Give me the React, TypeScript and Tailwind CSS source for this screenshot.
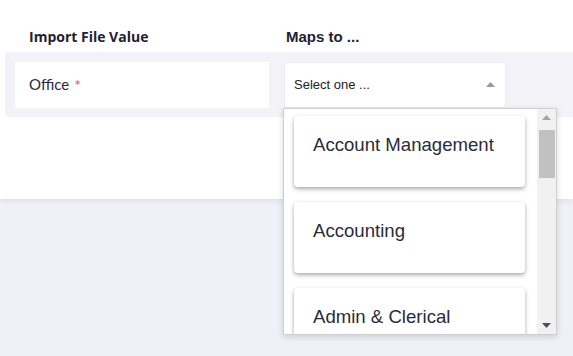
import React from "react";

const items = ["Account Management", "Accounting", "Admin & Clerical"];

export default function App() {
  return (
    <div className="relative min-h-[356px] w-full overflow-hidden bg-[#f0f0f8]">
      <div className="h-[199px] bg-white shadow-[0_2px_6px_rgba(0,0,0,0.08)]">
        <div className="flex h-[52px] items-start pt-[28px] text-[#222230]">
          <div className="ml-[29px] w-[257px] font-['Open_Sans',sans-serif] text-[14px] font-bold leading-[18px]">
            Import File Value
          </div>
          <div className="font-['Liberation_Sans',Arial,sans-serif] text-[15px] font-bold leading-[18px]">
            Maps to ...
          </div>
        </div>
        <div className="ml-[5px] flex h-[65px] items-center gap-[15px] rounded-l-[4px] bg-[#f2f2f8] px-[10px]">
          <div className="flex h-[46px] w-[254px] items-center bg-white pl-[14px] font-['Lato',sans-serif] text-[15px] text-[#2a2a3a]">
            Office<span className="ml-[5px] text-[16px] text-[#ff4d5e]">*</span>
          </div>
          <div className="flex h-[46px] w-[222px] items-center justify-between border border-[#ececf0] bg-white pl-[9px] pr-[10px] font-['Liberation_Sans',Arial,sans-serif] text-[13px] text-[#222]">
            <span>Select one ...</span>
            <svg width="9" height="5" viewBox="0 0 9 5">
              <path d="M0 5 L4.5 0 L9 5 Z" fill="#9a9a9a" />
            </svg>
          </div>
        </div>
      </div>

      <div className="absolute left-[283px] top-[108px] flex h-[227px] w-[274px] border border-[#cfcfcf] bg-white shadow-[0_2px_6px_rgba(0,0,0,0.15)]">
        <div className="flex flex-1 flex-col gap-[15px] overflow-hidden pl-[10px] pr-[9px] pt-[7px]">
          {items.map((t) => (
            <div
              key={t}
              className="h-[71px] w-[231px] shrink-0 rounded-[4px] bg-white pl-[19px] pt-[18px] font-['Liberation_Sans',Arial,sans-serif] text-[18.6px] leading-[22px] text-[#2b2b3a] shadow-[0_2px_4px_rgba(0,0,0,0.35)]"
            >
              {t}
            </div>
          ))}
        </div>
        <div className="flex w-[19px] flex-col items-center bg-[#f1f1f1]">
          <div className="flex h-[17px] w-full items-center justify-center">
            <svg width="9" height="5" viewBox="0 0 9 5">
              <path d="M0 5 L4.5 0 L9 5 Z" fill="#a3a3a3" />
            </svg>
          </div>
          <div className="ml-[1px] mt-[4px] h-[48px] w-[16px] bg-[#c1c1c1]" />
          <div className="flex-1" />
          <div className="flex h-[17px] w-full items-center justify-center">
            <svg width="9" height="5" viewBox="0 0 9 5">
              <path d="M0 0 L4.5 5 L9 0 Z" fill="#505050" />
            </svg>
          </div>
        </div>
      </div>
    </div>
  );
}
